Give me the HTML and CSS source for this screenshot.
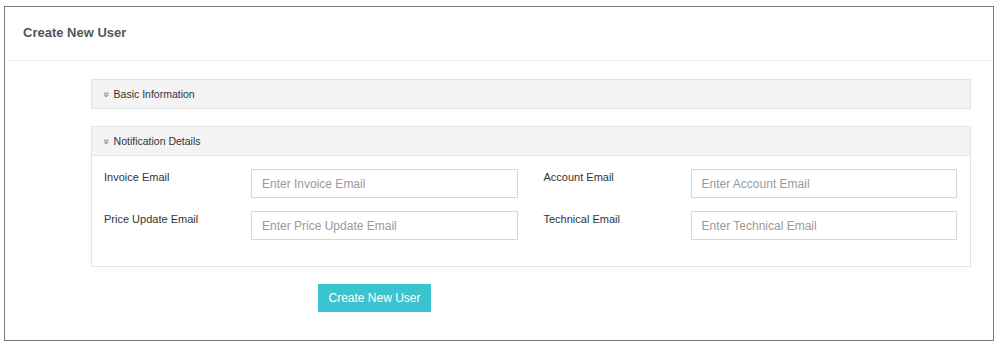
FILE: index.html
```html
<!DOCTYPE html>
<html lang="en">
<head>
  <meta charset="UTF-8">
  <title>Create New User</title>
  <link rel="stylesheet" href="styles.css">
</head>
<body>
  <div class="frame">
    <div class="box-header">
      <h3>Create New User</h3>
    </div>
    <div class="box-body">
      <div class="panel">
        <div class="panel-heading"><span class="chev">&#187;</span>Basic Information</div>
      </div>
      <div class="panel">
        <div class="panel-heading"><span class="chev">&#187;</span>Notification Details</div>
        <div class="panel-body">
          <div class="field">
            <label>Invoice Email</label>
            <input type="email" placeholder="Enter Invoice Email">
          </div>
          <div class="field">
            <label>Account Email</label>
            <input type="email" placeholder="Enter Account Email">
          </div>
          <div class="field">
            <label>Price Update Email</label>
            <input type="email" placeholder="Enter Price Update Email">
          </div>
          <div class="field">
            <label>Technical Email</label>
            <input type="email" placeholder="Enter Technical Email">
          </div>
        </div>
      </div>
      <div class="actions">
        <button type="submit" class="btn">Create New User</button>
      </div>
    </div>
  </div>
</body>
</html>
```

FILE: styles.css
```css
* { margin: 0; padding: 0; box-sizing: border-box; }
body {
  font-family: 'Liberation Sans', Arial, sans-serif;
  background: #fff;
  color: #333;
  padding: 6px 5px 2px 4px;
}
.frame { border: 1px solid #7b7b7b; height: 335px; background: #fff; }
.box-header { height: 54px; border-bottom: 1px solid #f2f2f2; display: flex; align-items: center; padding: 0 18px; }
.box-header h3 { font-size: 13px; font-weight: 700; color: #555; margin-top: -2px; }
.box-body { padding: 18px 22px 0 86px; }
.panel { border: 1px solid #e4e4e4; margin-bottom: 17px; background: #fff; }
.panel-heading { background: #f4f4f4; height: 28px; display: flex; align-items: center; padding: 0 12px; font-size: 10.5px; color: #333; }
.panel .panel-heading + .panel-body { border-top: 1px solid #e4e4e4; }
.chev { display: inline-block; transform: rotate(90deg); font-size: 10px; color: #777; margin-right: 4px; }
.panel-body { display: grid; grid-template-columns: 1fr 1fr; column-gap: 26px; row-gap: 13px; padding: 13px 13px 26px 12px; }
.field { display: flex; align-items: flex-start; }
.field label { width: 147px; flex: none; font-size: 11px; color: #333; padding-top: 2px; }
.field input {
  flex: 1; height: 29px; border: 1px solid #d8d8d8; padding: 0 10px;
  font-family: inherit; font-size: 12px; color: #333; outline: none;
}
.field input::placeholder { color: #9a9a9a; }
.actions { padding-left: 227px; }
.btn {
  background: #3ac4d0; color: #fff; border: none; height: 28px; width: 113px;
  font-family: inherit; font-size: 12px; cursor: pointer;
}
```
